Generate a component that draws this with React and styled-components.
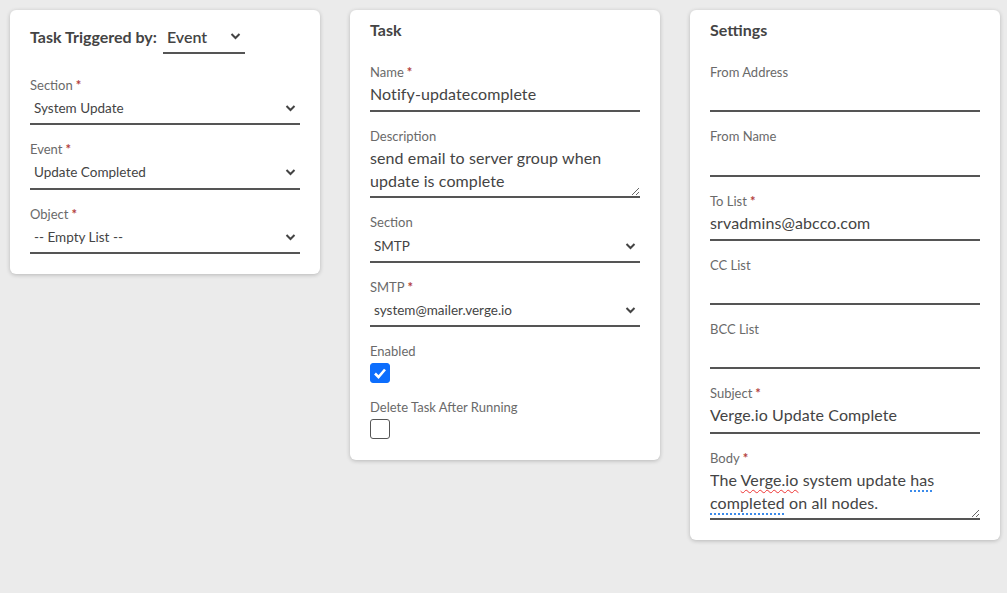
import styled, { createGlobalStyle } from "styled-components";

const GlobalStyle = createGlobalStyle`
    html, body {
        margin: 0;
        padding: 0;
        background: #ebebeb;
        font-family: Lato, "Open Sans", sans-serif;
    }
`;

const Page = styled.div`
    display: flex;
    align-items: flex-start;
    gap: 30px;
    padding: 10px;
    width: 1007px;
    height: 593px;
    box-sizing: border-box;
`;

const Card = styled.div`
    flex: 0 0 310px;
    width: 310px;
    box-sizing: border-box;
    background: #fff;
    border-radius: 6px;
    box-shadow: 0 1px 4px rgba(0, 0, 0, 0.22);
    padding: 10px 20px 20px;
    display: flex;
    flex-direction: column;
    gap: 16px;
`;

const Title = styled.div`
    font-size: 16px;
    font-weight: 700;
    color: #444;
    line-height: 20px;
    margin-bottom: 8px;
`;

const TriggerRow = styled.div`
    display: flex;
    align-items: center;
    gap: 6px;
    margin-top: 1px;
    margin-bottom: 7px;
`;

const TriggerTitle = styled(Title)`
    margin: 0;
`;

const Field = styled.div`
    display: flex;
    flex-direction: column;
`;

const Label = styled.div`
    font-size: 13px;
    line-height: 16px;
    color: #6a6a6a;
`;

const Req = styled.span`
    color: #b3403c;
    font-weight: 700;
    margin-left: 3px;
`;

const Input = styled.div`
    height: 30.3px;
    border-bottom: 2px solid #555;
    font-size: 16px;
    letter-spacing: 0.1px;
    line-height: 28px;
    color: #444;
    white-space: nowrap;
`;

const TextBox = styled.div`
    border-bottom: 2px solid #555;
    padding: 2px 0 4px;
    font-size: 16px;
    letter-spacing: 0.1px;
    line-height: 23px;
    color: #444;
    resize: vertical;
    overflow: hidden;
`;

const SelectBox = styled.div`
    height: 30.5px;
    border-bottom: 2px solid #555;
    display: flex;
    align-items: center;
    justify-content: space-between;
    padding: 0 4px;
    font-size: ${(p) => (p.$big ? "16px" : "13.5px")};
    font-weight: ${(p) => (p.$big ? 600 : 400)};
    color: #444;
    width: ${(p) => p.$width || "auto"};
    box-sizing: content-box;
`;

const Spell = styled.span`
    text-decoration: underline wavy #e33;
    text-decoration-thickness: 1px;
    text-underline-offset: 3px;
`;

const Grammar = styled.span`
    text-decoration: underline dotted #3b8beb;
    text-decoration-thickness: 2px;
    text-underline-offset: 5px;
`;

const Check = styled.div`
    width: 20px;
    height: 20px;
    box-sizing: border-box;
    margin-top: 4px;
    border-radius: 3px;
    border: 1px solid ${(p) => (p.$on ? "#0d6efd" : "#555")};
    background: ${(p) => (p.$on ? "#0d6efd" : "#fff")};
    display: flex;
    align-items: center;
    justify-content: center;
`;

const LastCard = styled(Card)`
    padding-bottom: 21px;
`;

function Chevron() {
    return (
        <svg width="11" height="8" viewBox="0 0 11 8">
            <path d="M1.5 2 L5.5 6 L9.5 2" fill="none" stroke="#444" strokeWidth="2" />
        </svg>
    );
}

function Select({ children, big, width }) {
    return (
        <SelectBox $big={big} $width={width}>
            <span>{children}</span>
            <Chevron />
        </SelectBox>
    );
}

function LabelText({ children, req }) {
    return (
        <Label>
            {children}
            {req && <Req>*</Req>}
        </Label>
    );
}

export default function App() {
    return (
        <>
            <GlobalStyle />
            <Page>
                <Card>
                    <TriggerRow>
                        <TriggerTitle>Task Triggered by:</TriggerTitle>
                        <Select big width="74px">Event</Select>
                    </TriggerRow>
                    <Field>
                        <LabelText req>Section</LabelText>
                        <Select>System Update</Select>
                    </Field>
                    <Field>
                        <LabelText req>Event</LabelText>
                        <Select>Update Completed</Select>
                    </Field>
                    <Field>
                        <LabelText req>Object</LabelText>
                        <Select>-- Empty List --</Select>
                    </Field>
                </Card>

                <LastCard>
                    <Title>Task</Title>
                    <Field>
                        <LabelText req>Name</LabelText>
                        <Input>Notify-updatecomplete</Input>
                    </Field>
                    <Field>
                        <LabelText>Description</LabelText>
                        <TextBox>send email to server group when update is complete</TextBox>
                    </Field>
                    <Field>
                        <LabelText>Section</LabelText>
                        <Select>SMTP</Select>
                    </Field>
                    <Field>
                        <LabelText req>SMTP</LabelText>
                        <Select>system@mailer.verge.io</Select>
                    </Field>
                    <Field>
                        <LabelText>Enabled</LabelText>
                        <Check $on>
                            <svg width="14" height="12" viewBox="0 0 14 12">
                                <path d="M2 6.5 L5.5 10 L12 2.5" fill="none" stroke="#fff" strokeWidth="2.6" />
                            </svg>
                        </Check>
                    </Field>
                    <Field>
                        <LabelText>Delete Task After Running</LabelText>
                        <Check />
                    </Field>
                </LastCard>

                <Card>
                    <Title>Settings</Title>
                    <Field>
                        <LabelText>From Address</LabelText>
                        <Input />
                    </Field>
                    <Field>
                        <LabelText>From Name</LabelText>
                        <Input />
                    </Field>
                    <Field>
                        <LabelText req>To List</LabelText>
                        <Input>srvadmins@abcco.com</Input>
                    </Field>
                    <Field>
                        <LabelText>CC List</LabelText>
                        <Input />
                    </Field>
                    <Field>
                        <LabelText>BCC List</LabelText>
                        <Input />
                    </Field>
                    <Field>
                        <LabelText req>Subject</LabelText>
                        <Input>Verge.io Update Complete</Input>
                    </Field>
                    <Field>
                        <LabelText req>Body</LabelText>
                        <TextBox>
                            The <Spell>Verge.io</Spell> system update <Grammar>has</Grammar>{" "}
                            <Grammar>completed</Grammar> on all nodes.
                        </TextBox>
                    </Field>
                </Card>
            </Page>
        </>
    );
}
